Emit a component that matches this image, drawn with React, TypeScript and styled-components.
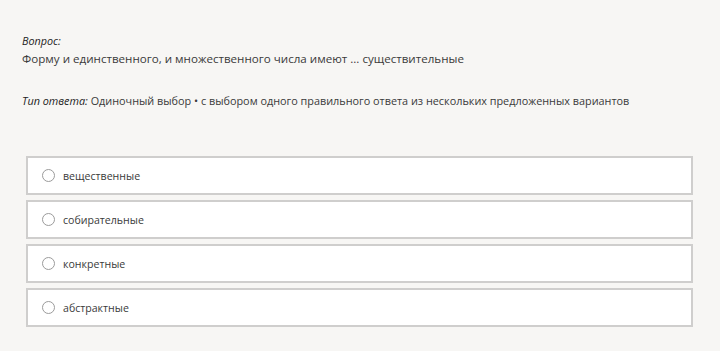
import * as React from 'react';
import styled, { createGlobalStyle } from 'styled-components';

const GlobalStyle = createGlobalStyle`
  html, body {
    margin: 0;
    padding: 0;
    background: #f7f6f4;
  }
  body {
    font-family: 'Open Sans', 'Noto Sans', sans-serif;
    color: #333;
  }
`;

const Page = styled.main`
  width: 720px;
  height: 351px;
  box-sizing: border-box;
  padding: 33px 27px 0 22px;
  background: #f7f6f4;
`;

const Label = styled.div`
  font-size: 10.8px;
  font-style: italic;
  line-height: 15px;
  color: #222;
`;

const Question = styled.p`
  margin: 2px 0 0;
  font-size: 11.6px;
  line-height: 17px;
  color: #3a3a3a;
`;

const TypeLine = styled.p`
  margin: 26px 0 0;
  font-size: 10.85px;
  line-height: 16px;
  color: #3a3a3a;
`;

const TypeLabel = styled.em`
  color: #222;
`;

const Options = styled.ul`
  list-style: none;
  margin: 47px 0 0 4px;
  padding: 0;
  display: flex;
  flex-direction: column;
  gap: 5px;
`;

const Option = styled.li`
  display: flex;
  align-items: center;
  gap: 8px;
  height: 39px;
  box-sizing: border-box;
  padding: 0 0 0 14px;
  background: #fff;
  border: 2px solid #cfcecd;
`;

const Radio = styled.span`
  width: 11px;
  height: 11px;
  border-radius: 50%;
  border: 1px solid #9b9b9b;
  background: #fff;
  flex-shrink: 0;
`;

const OptionText = styled.span`
  font-size: 10.6px;
  color: #3a3a3a;
`;

const answers = ['вещественные', 'собирательные', 'конкретные', 'абстрактные'];

const App: React.FC = () => (
  <>
    <GlobalStyle />
    <Page>
      <Label>Вопрос:</Label>
      <Question>
        Форму и единственного, и множественного числа имеют ... существительные
      </Question>
      <TypeLine>
        <TypeLabel>Тип ответа:</TypeLabel> Одиночный выбор • с выбором одного правильного ответа из
        нескольких предложенных вариантов
      </TypeLine>
      <Options>
        {answers.map((a) => (
          <Option key={a}>
            <Radio />
            <OptionText>{a}</OptionText>
          </Option>
        ))}
      </Options>
    </Page>
  </>
);

export default App;
